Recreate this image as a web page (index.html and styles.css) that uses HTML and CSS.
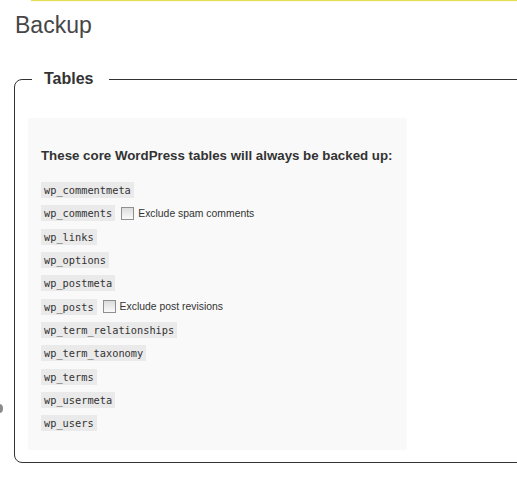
FILE: index.html
```html
<!DOCTYPE html>
<html lang="en">
<head>
    <meta charset="UTF-8">
    <meta name="viewport" content="width=device-width, initial-scale=1.0">
    <title>Backup</title>
    <link rel="stylesheet" href="styles.css">
</head>
<body>
    <div class="wrap">
        <div class="nag-line"></div>
        <h2>Backup</h2>

        <span class="side-handle"></span>

        <fieldset class="tables">
            <legend>Tables</legend>

            <div class="core-box">
                <h3>These core WordPress tables will always be backed up:</h3>

                <div class="row"><code>wp_commentmeta</code></div>
                <div class="row">
                    <code>wp_comments</code>
                    <span class="check"></span>
                    <label>Exclude spam comments</label>
                </div>
                <div class="row"><code>wp_links</code></div>
                <div class="row"><code>wp_options</code></div>
                <div class="row"><code>wp_postmeta</code></div>
                <div class="row">
                    <code>wp_posts</code>
                    <span class="check"></span>
                    <label>Exclude post revisions</label>
                </div>
                <div class="row"><code>wp_term_relationships</code></div>
                <div class="row"><code>wp_term_taxonomy</code></div>
                <div class="row"><code>wp_terms</code></div>
                <div class="row"><code>wp_usermeta</code></div>
                <div class="row"><code>wp_users</code></div>
            </div>
        </fieldset>
    </div>
</body>
</html>
```

FILE: styles.css
```css
html, body {
    margin: 0;
    padding: 0;
    overflow: hidden;
}

body {
    font-family: "Liberation Sans", Arial, sans-serif;
    color: #333;
    background: #fff;
}

.wrap {
    position: relative;
    height: 485px;
    overflow: hidden;
}

.nag-line {
    margin-left: 31px;
    height: 1px;
    background: #e6db55;
    box-shadow: 0 1px 0 #fffbe4;
}

h2 {
    margin: 10px 0 0 15px;
    font-size: 23px;
    line-height: 29px;
    font-weight: normal;
    color: #464646;
}

.side-handle {
    position: absolute;
    left: -4px;
    top: 404px;
    width: 7px;
    height: 9px;
    border-radius: 2px 50% 50% 2px;
    background: #8a8a8a;
}

.tables {
    margin: 30px 0 0 14px;
    width: 620px;
    padding: 30px 0 12px 13px;
    border: 1px solid #333;
    border-radius: 8px;
}

.tables legend {
    margin-left: 4px;
    padding: 0 15px 0 12px;
    font-size: 16px;
    font-weight: bold;
    color: #333;
}

.core-box {
    width: 379px;
    box-sizing: border-box;
    padding: 30px 13px 15px;
    background: #f9f9f9;
}

.core-box h3 {
    margin: 0 0 14.5px;
    font-size: 13.3px;
    line-height: 16px;
    white-space: nowrap;
    color: #333;
}

.row {
    height: 23.3px;
    display: flex;
    align-items: center;
}

code {
    font-family: "DejaVu Sans Mono", monospace;
    font-size: 10.3px;
    line-height: 12px;
    padding: 2px 3px 2px;
    background: #eaeaea;
    color: #333;
}

.check {
    width: 11px;
    height: 11px;
    margin: 0 4px 0 6px;
    border: 1px solid #8f8f8f;
    background: linear-gradient(#dcdcdc, #fafafa);
}

label {
    font-size: 10.4px;
    color: #333;
}
```
